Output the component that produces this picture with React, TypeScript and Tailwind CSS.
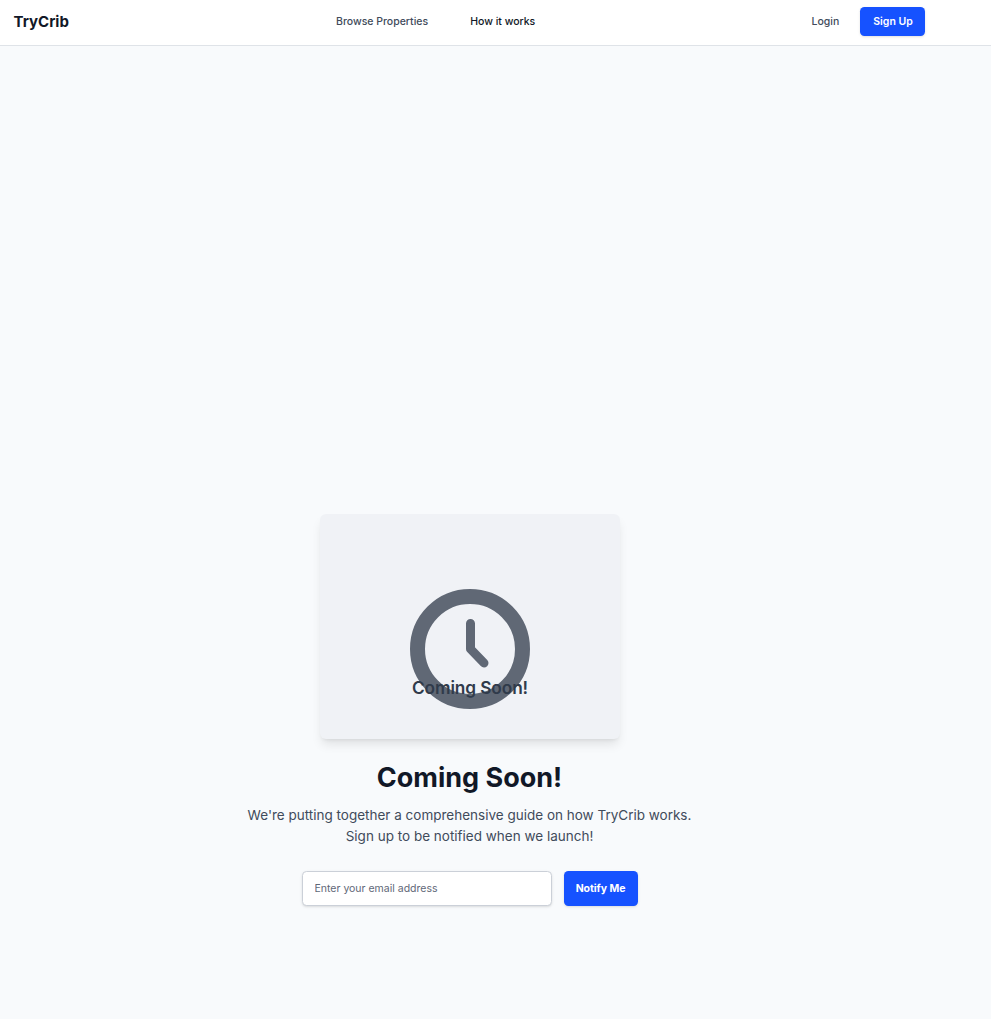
export default function App() {
  return (
    <div className="flex min-h-screen flex-col bg-[#f8fafc] font-['Inter',sans-serif] text-[#111827]">
      <header className="flex h-[46px] shrink-0 items-start border-b border-[#dfe3e8] bg-white pt-[7px]">
        <a className="ml-[13.5px] w-[322.5px] text-[15px] leading-[29px] font-bold">TryCrib</a>
        <nav className="flex w-[475.5px] gap-[42px] text-[10.5px] leading-[29px] font-medium whitespace-nowrap">
          <a className="text-[#414b5b]">Browse Properties</a>
          <a className="text-[#111827]">How it works</a>
        </nav>
        <a className="w-[48.5px] text-[10.5px] leading-[29px] font-medium text-[#414b5b]">Login</a>
        <button className="h-[29px] w-[65px] rounded-[4.5px] bg-[#1652ff] pl-px text-[10.5px] font-semibold text-white shadow-sm">Sign Up</button>
      </header>
      <main className="flex w-[940px] flex-col items-center pt-[468px]">
        <div className="relative h-[225px] w-[300px] rounded-[6px] bg-[#f0f2f6] shadow-[0_7px_11px_-2px_rgb(0_0_0/0.1),0_3px_4px_-3px_rgb(0_0_0/0.1)]">
          <svg className="block h-full w-full" viewBox="0 0 300 225" fill="none" stroke="#606875">
            <circle cx="150" cy="135" r="52.5" strokeWidth="15" />
            <path d="M150.5 109.5V135L164 149" strokeWidth="9" strokeLinecap="round" strokeLinejoin="round" />
          </svg>
          <span className="absolute inset-x-0 top-[162px] text-center text-[17.25px] leading-6 font-semibold tracking-[-0.1px] text-[#303b4b]">Coming Soon!</span>
        </div>
        <h1 className="mt-[21px] pr-px text-[27px] leading-[35px] font-bold">Coming Soon!</h1>
        <p className="mt-[10px] pr-px text-center text-[13.5px] leading-[21px] text-[#414b5b]">
          We're putting together a comprehensive guide on how TryCrib works.
          <br />
          Sign up to be notified when we launch!
        </p>
        <form className="mt-[24px] flex gap-3">
          <input
            type="email"
            placeholder="Enter your email address"
            className="h-[35px] w-[250px] rounded-[4.5px] border border-[#cbd0d8] bg-white px-[11.5px] text-[10.5px] shadow-sm placeholder:text-[#5f6878]"
          />
          <button type="button" className="h-[35px] w-[74px] rounded-[4.5px] bg-[#1652ff] pr-px text-[10.5px] font-bold tracking-[-0.05px] text-white shadow-sm">Notify Me</button>
        </form>
      </main>
    </div>
  );
}
